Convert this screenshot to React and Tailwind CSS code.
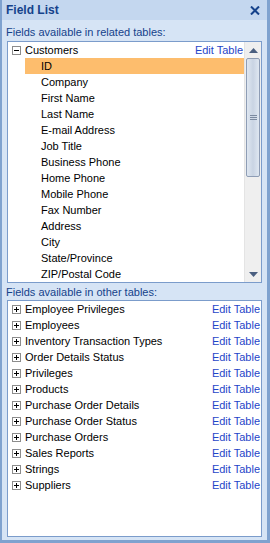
import React from 'react';

const related = [
  'ID', 'Company', 'First Name', 'Last Name', 'E-mail Address', 'Job Title',
  'Business Phone', 'Home Phone', 'Mobile Phone', 'Fax Number', 'Address',
  'City', 'State/Province', 'ZIP/Postal Code',
];

const others = [
  'Employee Privileges', 'Employees', 'Inventory Transaction Types',
  'Order Details Status', 'Privileges', 'Products', 'Purchase Order Details',
  'Purchase Order Status', 'Purchase Orders', 'Sales Reports', 'Strings', 'Suppliers',
];

const ExpandBox = ({ open }) => (
  <svg width="9" height="9" viewBox="0 0 9 9" className="shrink-0">
    <rect x="0.5" y="0.5" width="8" height="8" fill="#fff" stroke="#8c8c8c" />
    <path d="M2 4.5h5" stroke="#000" />
    {!open && <path d="M4.5 2v5" stroke="#000" />}
  </svg>
);

const Scrollbar = () => (
  <div className="w-[17px] flex flex-col bg-[#efefef] border-l border-[#e4e4e4]">
    <div className="h-[16px] flex items-center justify-center">
      <svg width="9" height="5" viewBox="0 0 9 5"><path d="M4.5 0L9 5H0z" fill="#4a5f80" /></svg>
    </div>
    <div className="h-[119px] mx-[1px] rounded-[2px] border border-[#8e9db5] bg-gradient-to-r from-[#dfe7f1] via-[#c9d4e3] to-[#dfe7f1] flex items-center justify-center">
      <div className="flex flex-col gap-[1px]">
        <div className="w-[7px] h-[1px] bg-[#7b8aa0]" />
        <div className="w-[7px] h-[1px] bg-[#7b8aa0]" />
        <div className="w-[7px] h-[1px] bg-[#7b8aa0]" />
      </div>
    </div>
    <div className="flex-1" />
    <div className="h-[16px] flex items-center justify-center">
      <svg width="9" height="5" viewBox="0 0 9 5"><path d="M0 0H9L4.5 5z" fill="#4a5f80" /></svg>
    </div>
  </div>
);

export default function App() {
  return (
    <div
      className="w-[270px] h-[543px] flex flex-col bg-[#d6e4f5] border-l-2 border-r-[3px] border-b-[3px] border-[#7fa2cf] text-[11px] leading-[16px] text-black"
      style={{ fontFamily: '"Liberation Sans", Arial, sans-serif' }}
    >
      <div className="h-[20px] shrink-0 flex items-center justify-between pl-[4px] pr-[7px] bg-[#c4d7ef]">
        <span className="font-bold text-[#15428b] text-[12px]">Field List</span>
        <svg width="10" height="9" viewBox="0 0 10 9">
          <path d="M1 0.5L9 8.5M9 0.5L1 8.5" stroke="#15428b" strokeWidth="2" />
        </svg>
      </div>

      <div className="flex-1 flex flex-col pl-[5px] pr-[5px]">
        <div className="h-[21px] pt-[4px] pl-[-1px] text-[#15428b] -ml-[1px]">Fields available in related tables:</div>
        <div className="h-[242px] flex border border-[#7b9ccb] bg-white">
          <div className="flex-1 flex flex-col">
            <div className="h-[16px] flex items-center pl-[4px] pr-[1px]">
              <ExpandBox open />
              <span className="ml-[4px] flex-1">Customers</span>
              <span className="text-[#1f45c8]">Edit Table</span>
            </div>
            {related.map((f, i) => (
              <div key={f} className="h-[16px] flex items-center pl-[17px]">
                <div className={`h-[16px] flex-1 flex items-center pl-[16px] ${i === 0 ? 'bg-[#fdbd6d]' : ''}`}>
                  {f}
                </div>
              </div>
            ))}
          </div>
          <Scrollbar />
        </div>

        <div className="h-[17px] pt-[1px] text-[#15428b] -ml-[1px]">Fields available in other tables:</div>
        <div className="h-[237px] border border-[#7b9ccb] bg-white">
          {others.map((t) => (
            <div key={t} className="h-[16px] flex items-center pl-[4px] pr-[1px]">
              <ExpandBox />
              <span className="ml-[4px] flex-1">{t}</span>
              <span className="text-[#1f45c8]">Edit Table</span>
            </div>
          ))}
        </div>
      </div>
    </div>
  );
}
